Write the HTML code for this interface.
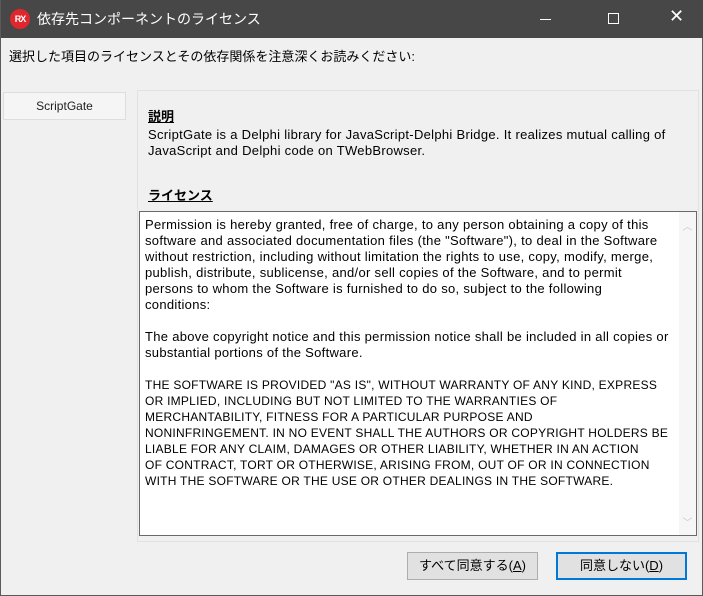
<!DOCTYPE html>
<html><head><meta charset="utf-8"><style>
*{margin:0;padding:0;box-sizing:border-box}
body{width:703px;height:596px;background:#f0f0f0;font-family:"Liberation Sans","Noto Sans CJK JP",sans-serif;font-size:12px;color:#000;position:relative;overflow:hidden;border:1px solid #5a5a5a;border-top:none}
.tb{position:absolute;left:0;top:0;width:703px;height:38px;background:#474747;color:#fff}
.logo{position:absolute;left:9px;top:9px;width:20px;height:20px;border-radius:50%;background:#e0272d;color:#fff;font-size:9px;font-weight:bold;text-align:center;line-height:20px;letter-spacing:-1px}
.tt{position:absolute;left:36px;top:9px;font-size:14px}
.ab{position:absolute;font-size:12px}
.item{position:absolute;left:2px;top:92px;width:123px;height:28px;background:#f5f5f5;border:1px solid #ddd;text-align:center;line-height:26px;color:#222}
.panel{position:absolute;left:136px;top:90px;width:562px;height:452px;border:1px solid #e2e2e2;background:#f0f0f0}
.h{position:absolute;left:147px;font-weight:bold;text-decoration:underline;font-size:13px}
.box{position:absolute;left:138px;top:211px;width:558px;height:325px;background:#fff;border:1px solid #6a6a6a;overflow:hidden}
.txt{position:absolute;left:5px;top:5px;width:540px;line-height:16px;font-size:13px;letter-spacing:0.3px;white-space:nowrap}
.up{font-size:12px;letter-spacing:0.25px}
.sb{position:absolute;right:0;top:0;width:17px;height:100%;background:#f6f6f6;color:#c8c8c8;font-size:10px;text-align:center}
.btn{position:absolute;top:552px;height:28px;background:#e1e1e1;border:1px solid #adadad;text-align:center;line-height:26px;font-size:13px}
</style></head><body>
<div class="tb"><div class="logo">RX</div><div class="tt">依存先コンポーネントのライセンス</div>
<div style="position:absolute;left:539px;top:19px;width:11px;height:1px;background:#fff"></div>
<div style="position:absolute;left:607px;top:13px;width:11px;height:11px;border:1px solid #fff"></div>
<div style="position:absolute;left:668px;top:6px;font-size:18px;color:#fff">✕</div></div>
<div class="ab" style="left:8px;top:46px;font-size:13px">選択した項目のライセンスとその依存関係を注意深くお読みください:</div>
<div class="item">ScriptGate</div>
<div class="panel"></div>
<div class="h" style="top:106px">説明</div>
<div class="ab" style="left:147px;top:127px;line-height:16px;font-size:13px;letter-spacing:0.3px;white-space:nowrap">ScriptGate is a Delphi library for JavaScript-Delphi Bridge. It realizes mutual calling of<br>JavaScript and Delphi code on TWebBrowser.</div>
<div class="h" style="top:185px">ライセンス</div>
<div class="box"><div class="txt">Permission is hereby granted, free of charge, to any person obtaining a copy of this<br>software and associated documentation files (the "Software"), to deal in the Software<br>without restriction, including without limitation the rights to use, copy, modify, merge,<br>publish, distribute, sublicense, and/or sell copies of the Software, and to permit<br>persons to whom the Software is furnished to do so, subject to the following<br>conditions:<br><br>The above copyright notice and this permission notice shall be included in all copies or<br>substantial portions of the Software.<br><br><span class="up">THE SOFTWARE IS PROVIDED "AS IS", WITHOUT WARRANTY OF ANY KIND, EXPRESS<br>OR IMPLIED, INCLUDING BUT NOT LIMITED TO THE WARRANTIES OF<br>MERCHANTABILITY, FITNESS FOR A PARTICULAR PURPOSE AND<br>NONINFRINGEMENT. IN NO EVENT SHALL THE AUTHORS OR COPYRIGHT HOLDERS BE<br>LIABLE FOR ANY CLAIM, DAMAGES OR OTHER LIABILITY, WHETHER IN AN ACTION<br>OF CONTRACT, TORT OR OTHERWISE, ARISING FROM, OUT OF OR IN CONNECTION<br>WITH THE SOFTWARE OR THE USE OR OTHER DEALINGS IN THE SOFTWARE.</span></div>
<div class="sb"><div style="margin-top:6px">︿</div><div style="position:absolute;bottom:6px;width:17px">﹀</div></div></div>
<div class="btn" style="left:406px;width:131px">すべて同意する(<u>A</u>)</div>
<div class="btn" style="left:555px;width:131px;border:2px solid #0078d7;line-height:24px">同意しない(<u>D</u>)</div>
</body></html>
